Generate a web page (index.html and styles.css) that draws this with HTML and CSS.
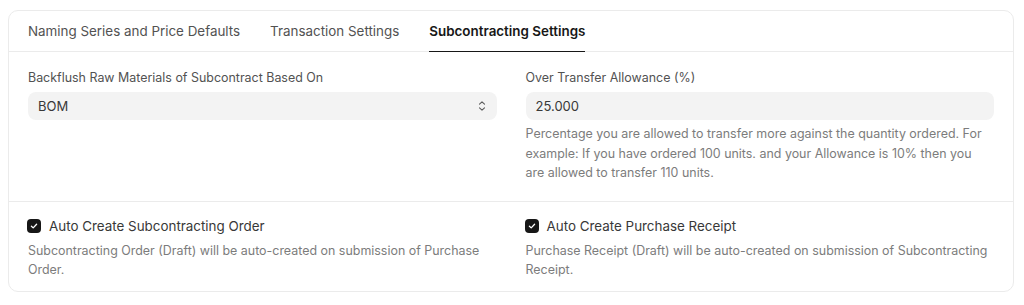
FILE: index.html
```html
<!DOCTYPE html>
<html>
<head>
<meta charset="utf-8">
<link rel="stylesheet" href="styles.css">
</head>
<body>
<div class="card">
  <div class="tabs">
    <div class="tab">Naming Series and Price Defaults</div>
    <div class="tab">Transaction Settings</div>
    <div class="tab active">Subcontracting Settings</div>
  </div>
  <div class="section first">
    <div class="col">
      <div class="label">Backflush Raw Materials of Subcontract Based On</div>
      <div class="input select">
        <span>BOM</span>
        <svg class="chev" width="8" height="12" viewBox="0 0 8 12"><path d="M1.5 4.2 L4 1.8 L6.5 4.2 M1.5 7.8 L4 10.2 L6.5 7.8" fill="none" stroke="#5a5a5a" stroke-width="1.1" stroke-linecap="round" stroke-linejoin="round"/></svg>
      </div>
    </div>
    <div class="col">
      <div class="label">Over Transfer Allowance (%)</div>
      <div class="input"><span>25.000</span></div>
      <div class="desc">Percentage you are allowed to transfer more against the quantity ordered. For example: If you have ordered 100 units. and your Allowance is 10% then you are allowed to transfer 110 units.</div>
    </div>
  </div>
  <div class="section second">
    <div class="col">
      <div class="check-row">
        <span class="checkbox"><svg width="8" height="8" viewBox="0 0 8 8"><path d="M1.4 4.2 L3.2 5.9 L6.6 2.2" fill="none" stroke="#fff" stroke-width="1.3" stroke-linecap="round" stroke-linejoin="round"/></svg></span>
        <span class="check-label">Auto Create Subcontracting Order</span>
      </div>
      <div class="desc">Subcontracting Order (Draft) will be auto-created on submission of Purchase Order.</div>
    </div>
    <div class="col">
      <div class="check-row">
        <span class="checkbox"><svg width="8" height="8" viewBox="0 0 8 8"><path d="M1.4 4.2 L3.2 5.9 L6.6 2.2" fill="none" stroke="#fff" stroke-width="1.3" stroke-linecap="round" stroke-linejoin="round"/></svg></span>
        <span class="check-label">Auto Create Purchase Receipt</span>
      </div>
      <div class="desc">Purchase Receipt (Draft) will be auto-created on submission of Subcontracting Receipt.</div>
    </div>
  </div>
</div>
</body>
</html>
```
FILE: styles.css
```css
* { box-sizing: border-box; }
html, body { background: #ffffff; }
body {
  margin: 0;
  padding: 10px 10px 0 8px;
  font-family: Inter, "Noto Sans", sans-serif;
  color: #171717;
}
.card {
  border: 1px solid #ebebeb;
  border-radius: 10px;
  background: #fff;
}
.tabs {
  display: flex;
  gap: 30px;
  padding: 0 19px;
  height: 41px;
  border-bottom: 1px solid #ebebeb;
}
.tab {
  font-size: 13.4px;
  color: #525252;
  display: flex;
  align-items: center;
  padding-top: 0;
  border-bottom: 1px solid transparent;
  margin-bottom: -1px;
}
.tab.active {
  color: #171717;
  font-weight: 600;
  border-bottom-color: #171717;
}
.section {
  display: grid;
  grid-template-columns: 1fr 1fr;
  column-gap: 29px;
  padding: 0 19px;
}
.section.first {
  padding-top: 18px;
  padding-bottom: 18px;
  border-bottom: 1px solid #ebebeb;
}
.section.second {
  padding-top: 15px;
  padding-bottom: 11px;
}
.label {
  font-size: 12.45px;
  line-height: 16px;
  color: #525252;
  margin-bottom: 6px;
}
.input {
  height: 28px;
  background: #f3f3f3;
  border-radius: 8px;
  display: flex;
  align-items: center;
  justify-content: space-between;
  padding: 0 10px 0 10px;
  font-size: 13px;
  color: #383838;
}
.chev { margin-right: 1px; }
.desc {
  font-size: 12.45px;
  line-height: 19.5px;
  color: #7c7c7c;
  margin-top: 4px;
  padding-right: 3px;
}
.check-row {
  display: flex;
  align-items: center;
  gap: 8px;
  height: 18px;
}
.checkbox {
  width: 14px;
  height: 14px;
  border-radius: 4px;
  background: #171717;
  display: flex;
  align-items: center;
  justify-content: center;
  margin-left: -1px;
}
.checkbox svg { display: block; }
.check-label {
  font-size: 13.4px;
  color: #383838;
}
.second .desc { margin-top: 6px; }
```
